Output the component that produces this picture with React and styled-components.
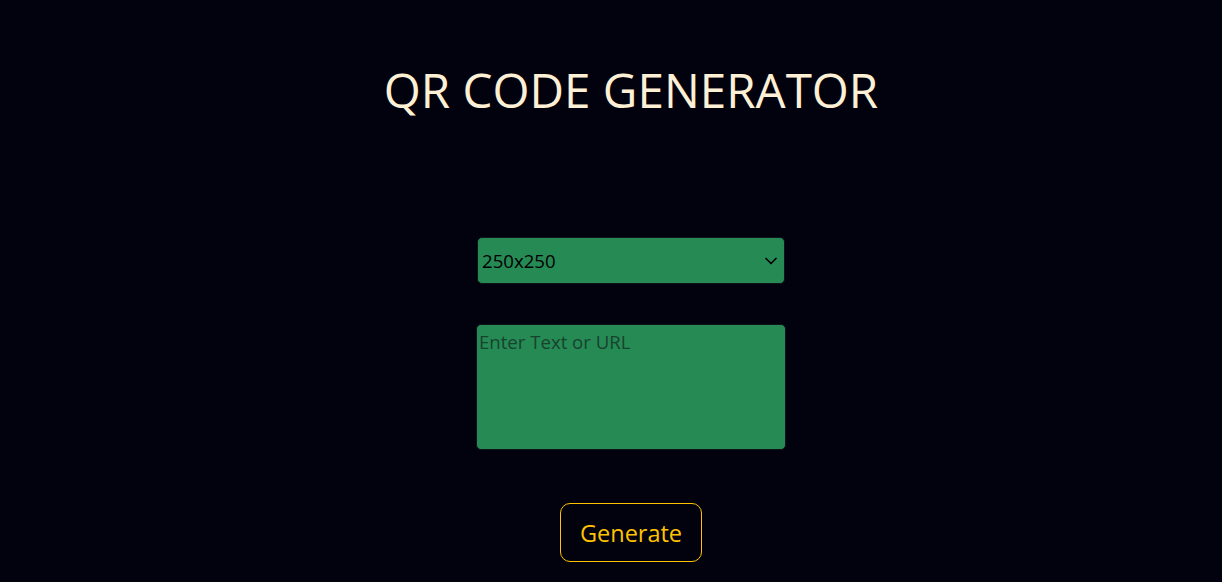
import styled, { createGlobalStyle } from "styled-components"
import { ChevronDown } from "lucide-react"

const Global = createGlobalStyle`
    body {
        margin: 0;
        background: #02010e;
        font-family: "Open Sans", "Noto Sans", sans-serif;
    }
`

const Page = styled.div`
    min-height: 100vh;
    display: flex;
    flex-direction: column;
    align-items: center;
    padding: 56px 0 0 40px;
    box-sizing: border-box;
`

const Title = styled.h1`
    margin: 0;
    font-size: 47.6px;
    font-weight: 400;
    color: #fdf0d5;
    line-height: 68px;
`

const Form = styled.div`
    margin-top: 113px;
    display: flex;
    flex-direction: column;
    align-items: center;
`

const SelectWrap = styled.div`
    position: relative;
    width: 308px;
    height: 47px;
`

const Select = styled.select`
    appearance: none;
    width: 100%;
    height: 100%;
    background: #268a55;
    border: 1px solid #11131a;
    border-radius: 5px;
    font-family: inherit;
    font-size: 18.6px;
    color: #000;
    padding: 0 4px;
    outline: none;
`

const Arrow = styled(ChevronDown)`
    position: absolute;
    right: 4px;
    top: 14px;
    pointer-events: none;
    color: #000;
`

const TextArea = styled.textarea`
    margin-top: 40px;
    width: 310px;
    height: 126px;
    box-sizing: border-box;
    background: #268a55;
    border: 1px solid #11131a;
    border-radius: 5px;
    font-family: inherit;
    font-size: 18.6px;
    padding: 4px 2px;
    resize: none;
    outline: none;

    &::placeholder {
        color: #17432d;
    }
`

const Button = styled.button`
    margin-top: 53px;
    width: 142px;
    height: 59px;
    background: transparent;
    border: 1px solid #ffc300;
    border-radius: 10px;
    color: #ffc300;
    font-family: inherit;
    font-size: 23.5px;
    cursor: pointer;
`

const App = () => {
    return (
        <Page>
            <Global />
            <Title>QR CODE GENERATOR</Title>
            <Form>
                <SelectWrap>
                    <Select defaultValue="250x250">
                        <option value="150x150">150x150</option>
                        <option value="250x250">250x250</option>
                        <option value="350x350">350x350</option>
                    </Select>
                    <Arrow size={20} strokeWidth={2} />
                </SelectWrap>
                <TextArea placeholder="Enter Text or URL" />
                <Button>Generate</Button>
            </Form>
        </Page>
    )
}

export default App
